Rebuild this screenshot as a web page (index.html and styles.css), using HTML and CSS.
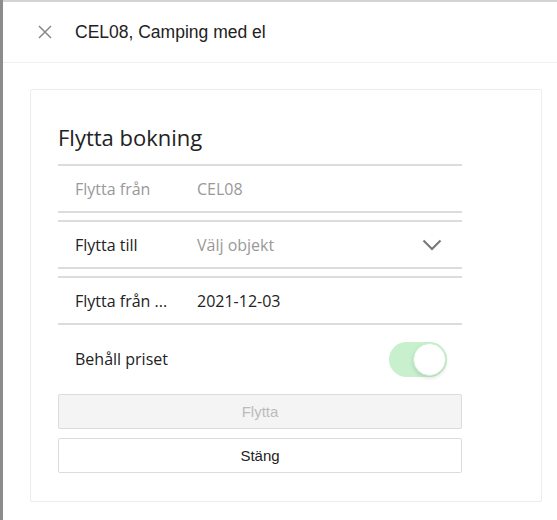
FILE: index.html
```html
<!DOCTYPE html>
<html lang="sv">
<head>
<meta charset="utf-8">
<link rel="stylesheet" href="styles.css">
</head>
<body>
<div class="page">
  <div class="strip"></div>
  <div class="panel">
    <div class="header">
      <svg class="close" width="14" height="14" viewBox="0 0 14 14"><path d="M1 1L13 13M13 1L1 13" stroke="#888" stroke-width="1.5" fill="none"/></svg>
      <span class="title">CEL08, Camping med el</span>
    </div>
    <div class="content">
      <div class="card">
        <h2 class="heading">Flytta bokning</h2>
        <div class="row">
          <span class="label muted">Flytta från</span>
          <span class="value muted">CEL08</span>
        </div>
        <div class="row">
          <span class="label">Flytta till</span>
          <span class="value muted">Välj objekt</span>
          <svg class="chev" width="20" height="12" viewBox="0 0 20 12"><path d="M1.5 1.5L10 10L18.5 1.5" stroke="#777" stroke-width="2" fill="none"/></svg>
        </div>
        <div class="row">
          <span class="label">Flytta från ...</span>
          <span class="value">2021-12-03</span>
        </div>
        <div class="toggle-row">
          <span class="label">Behåll priset</span>
          <span class="toggle"><span class="knob"></span></span>
        </div>
        <button class="btn btn-disabled">Flytta</button>
        <button class="btn">Stäng</button>
      </div>
    </div>
  </div>
</div>
</body>
</html>
```
FILE: styles.css
```css
html, body {
  margin: 0;
  padding: 0;
  background: #fff;
}
.page {
  display: flex;
  height: 520px;
}
.strip {
  width: 3px;
  flex-shrink: 0;
  background: #8c8c8c;
}
.panel {
  flex: 1;
  min-width: 0;
  border-top: 2px solid #d4d4d4;
}
.header {
  height: 60px;
  display: flex;
  align-items: center;
  padding-left: 35px;
  border-bottom: 1px solid #f0f0f0;
}
.close {
  margin-right: 23px;
}
.title {
  font-family: "Liberation Sans", Arial, sans-serif;
  font-size: 17.5px;
  color: #222;
}
.content {
  padding: 26px 0 0 27px;
}
.card {
  box-sizing: border-box;
  width: 512px;
  height: 413px;
  border: 1px solid #ececec;
  border-radius: 2px;
  padding: 20px 79px 0 27px;
  display: flex;
  flex-direction: column;
}
.heading {
  margin: 0;
  font-family: "Open Sans", sans-serif;
  font-weight: 400;
  font-size: 22px;
  color: #222;
  height: 54px;
  display: flex;
  align-items: center;
}
.row {
  display: flex;
  align-items: center;
  height: 45px;
  border-top: 2px solid #dcdcdc;
  border-bottom: 2px solid #dcdcdc;
  margin-bottom: 7px;
  padding-left: 17px;
  padding-right: 20px;
}
.label {
  font-family: "Open Sans", sans-serif;
  font-size: 16px;
  color: #222;
  width: 122px;
  white-space: nowrap;
}
.value {
  font-family: "Open Sans", sans-serif;
  font-size: 16px;
  color: #222;
  flex: 1;
}
.muted {
  color: #999;
}
.chev {
  display: block;
}
.toggle-row {
  display: flex;
  align-items: center;
  justify-content: space-between;
  height: 68px;
  margin-top: -7px;
  padding-left: 17px;
  padding-right: 15px;
  margin-bottom: 1px;
}
.toggle {
  position: relative;
  width: 58px;
  height: 35px;
  border-radius: 18px;
  background: #c8f0cd;
  display: block;
}
.knob {
  position: absolute;
  right: 1px;
  top: 1px;
  width: 31px;
  height: 31px;
  border-radius: 50%;
  background: #fff;
  border: 1px solid #c8f0cd;
  box-shadow: 0 2px 4px rgba(0,0,0,0.12);
}
.btn {
  width: 404px;
  height: 35px;
  border: 1px solid #dcdcdc;
  border-radius: 2px;
  background: #fff;
  font-family: "Liberation Sans", Arial, sans-serif;
  font-size: 15px;
  color: #222;
  margin-bottom: 9px;
  padding: 0;
}
.btn-disabled {
  background: #f4f4f4;
  color: #bbb;
}
```
